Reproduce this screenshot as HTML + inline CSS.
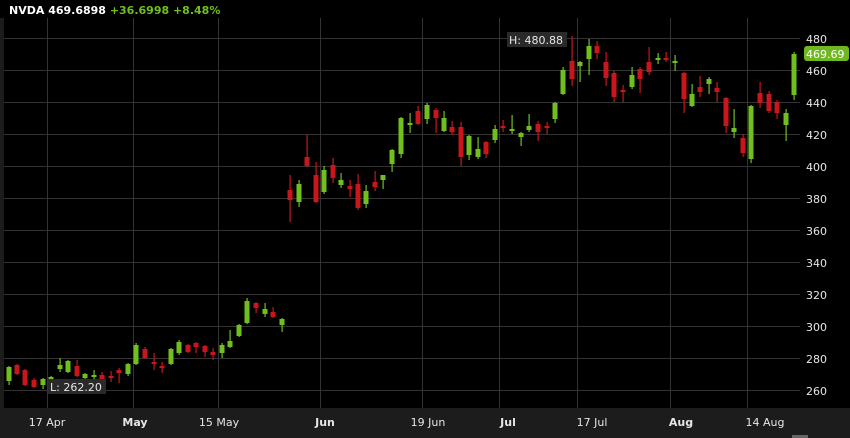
<!DOCTYPE html>
<html><head><meta charset="utf-8"><style>
html,body{margin:0;padding:0;background:#000;}
svg{display:block;font-family:"DejaVu Sans","Liberation Sans",sans-serif;}
</style></head><body>
<svg width="850" height="438" viewBox="0 0 850 438">
<rect width="850" height="438" fill="#000"/>
<rect x="0" y="18" width="4" height="390" fill="#1c1c1c"/>
<rect x="0" y="408" width="850" height="30" fill="#1c1c1c"/>
<g stroke="#333" stroke-width="1">
<line x1="4" x2="800" y1="38.5" y2="38.5"/><line x1="4" x2="800" y1="70.5" y2="70.5"/>
<line x1="4" x2="800" y1="102.5" y2="102.5"/><line x1="4" x2="800" y1="134.5" y2="134.5"/>
<line x1="4" x2="800" y1="166.5" y2="166.5"/><line x1="4" x2="800" y1="198.5" y2="198.5"/>
<line x1="4" x2="800" y1="230.5" y2="230.5"/><line x1="4" x2="800" y1="262.5" y2="262.5"/>
<line x1="4" x2="800" y1="294.5" y2="294.5"/><line x1="4" x2="800" y1="326.5" y2="326.5"/>
<line x1="4" x2="800" y1="358.5" y2="358.5"/><line x1="4" x2="800" y1="390.5" y2="390.5"/>
<line x1="47.5" x2="47.5" y1="18" y2="408"/><line x1="133.5" x2="133.5" y1="18" y2="408"/>
<line x1="218.5" x2="218.5" y1="18" y2="408"/><line x1="320.5" x2="320.5" y1="18" y2="408"/>
<line x1="422.5" x2="422.5" y1="18" y2="408"/><line x1="499.5" x2="499.5" y1="18" y2="408"/>
<line x1="577.5" x2="577.5" y1="18" y2="408"/><line x1="670.5" x2="670.5" y1="18" y2="408"/>
<line x1="747.5" x2="747.5" y1="18" y2="408"/>
</g>
<g id="c"></g>
<g font-size="11" fill="#e6e6e6">
<text x="806" y="43">480</text><text x="806" y="75">460</text><text x="806" y="107">440</text>
<text x="806" y="139">420</text><text x="806" y="171">400</text><text x="806" y="203">380</text>
<text x="806" y="235">360</text><text x="806" y="267">340</text><text x="806" y="299">320</text>
<text x="806" y="331">300</text><text x="806" y="363">280</text><text x="806" y="395">260</text>
</g>
<rect x="804" y="46" width="45" height="15" rx="3" fill="#6fb81f"/>
<text x="806" y="58" font-size="11" fill="#fff">469.69</text>
<rect x="507" y="32" width="60" height="15" fill="#2a2a2a"/>
<text x="509" y="44" font-size="11" fill="#e6e6e6">H: 480.88</text>
<rect x="48" y="379" width="58" height="15" fill="#2a2a2a"/>
<text x="50" y="391" font-size="11" fill="#e6e6e6">L: 262.20</text>
<g font-size="11" fill="#e6e6e6" text-anchor="middle">
<text x="47" y="426">17 Apr</text><text x="135" y="426" font-weight="bold">May</text>
<text x="219" y="426">15 May</text><text x="325" y="426" font-weight="bold">Jun</text>
<text x="428" y="426">19 Jun</text><text x="508" y="426" font-weight="bold">Jul</text>
<text x="592" y="426">17 Jul</text><text x="681" y="426" font-weight="bold">Aug</text>
<text x="765" y="426">14 Aug</text>
</g>
<rect x="792" y="435" width="16" height="3" fill="#666"/>
<text x="9" y="14" font-size="11" font-weight="bold" fill="#fff">NVDA <tspan>469.6898</tspan> <tspan fill="#6fbf1e">+36.6998 +8.48%</tspan></text>
</svg>
<script>
var d=[
[9,'g',367,381,366,385],[17,'r',365,374,364,375],[25,'r',370,385,369,386],[34,'r',380,387,378,388],
[43,'g',379,385,378,389],[51,'g',377,382,376,384],[60,'g',365,369,358,372],[68,'g',361,372,360,373],
[77,'r',366,376,360,377],[85,'g',374,378,373,379],[94,'g',375,377,370,380],[102,'r',375,380,372,382],
[111,'r',376,378,371,382],[119,'r',370,373,368,383],[128,'g',364,374,363,376],[136,'g',345,364,343,365],
[145,'r',349,358,347,359],[154,'r',362,364,353,370],[162,'r',366,368,362,373],[171,'g',349,364,348,365],
[179,'g',342,353,340,355],[188,'r',345,352,344,353],[196,'r',343,347,342,353],[205,'r',346,352,345,357],
[213,'r',352,355,348,360],[222,'g',345,353,343,358],[230,'g',341,347,330,348],[239,'g',325,336,324,337],
[247,'g',301,323,298,324],[256,'r',303,308,302,313],[265,'g',309,314,303,317],[273,'r',312,317,307,318],
[282,'g',319,325,318,332],
[290,'r',190,200,175,222],[299,'g',184,202,180,207],[307,'r',157,166,135,167],[316,'r',175,202,162,203],
[324,'g',170,192,166,194],[333,'r',165,178,158,183],[341,'g',180,185,173,188],[350,'r',186,189,180,197],
[358,'r',184,208,174,210],[366,'g',191,204,185,208],[375,'r',182,187,171,191],[383,'g',175,180,175,189],
[392,'g',150,164,149,172],[401,'g',118,154,117,158],[410,'g',123,125,113,133],[418,'r',111,124,106,125],
[427,'g',105,119,103,124],[436,'r',110,118,108,133],[444,'g',118,131,111,132],[452,'r',127,132,121,135],
[461,'r',127,157,122,166],[469,'g',136,155,135,160],[478,'g',149,157,137,159],[486,'r',142,154,141,158],
[495,'g',129,140,125,143],[503,'r',126,128,120,132],[512,'g',129,131,115,134],[521,'g',133,137,132,146],
[529,'g',126,130,114,132],[538,'r',124,132,121,141],[547,'r',126,128,122,134],[555,'g',103,119,102,123],
[563,'g',70,94,67,95],[572,'r',61,79,36,86],[580,'g',62,66,61,82],[589,'g',46,59,39,75],
[597,'r',46,53,41,59],[606,'r',62,78,52,86],[614,'r',73,97,71,102],[623,'r',90,92,85,102],
[632,'g',75,87,67,89],[640,'r',69,79,67,93],[649,'r',62,72,47,75],[658,'g',58,60,53,64],
[666,'r',58,60,52,62],[675,'g',61,63,55,71],[684,'r',73,99,72,113],[692,'g',94,106,84,107],
[700,'r',87,92,76,97],[709,'g',79,84,77,94],[717,'r',88,92,82,102],[726,'r',98,126,97,133],
[734,'g',128,132,109,138],[743,'r',138,153,134,157],[751,'g',106,159,105,163],[760,'r',93,103,82,108],
[769,'r',94,111,91,113],[777,'r',102,113,100,119],[786,'g',113,125,109,141],[794,'g',54,95,52,100]];
var s='';d.forEach(function(c){var col=c[1]=='g'?'#6fbf1e':'#c8161c';
s+='<rect x="'+(c[0]-0.5)+'" y="'+c[4]+'" width="1.2" height="'+(c[5]-c[4])+'" fill="'+col+'"/>';
var h=Math.max(2,c[3]-c[2]);s+='<rect x="'+(c[0]-2.5)+'" y="'+c[2]+'" width="5" height="'+h+'" fill="'+col+'"/>';});
document.getElementById('c').innerHTML=s;
</script>
</body></html>
